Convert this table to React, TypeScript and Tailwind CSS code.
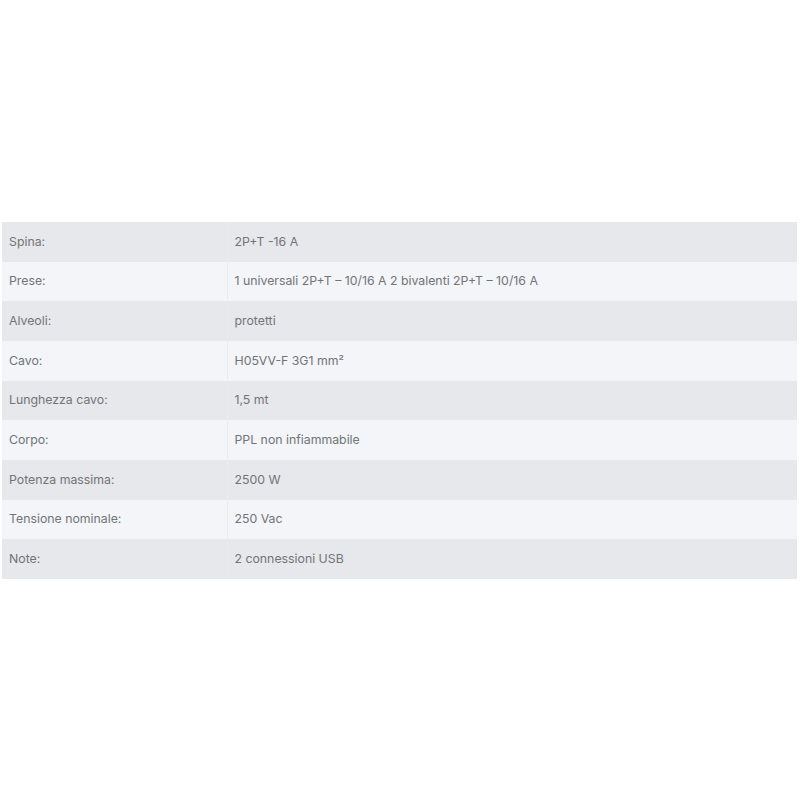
import React from 'react';

const rows = [
  ['Spina:', '2P+T -16 A'],
  ['Prese:', '1 universali 2P+T – 10/16 A 2 bivalenti 2P+T – 10/16 A'],
  ['Alveoli:', 'protetti'],
  ['Cavo:', 'H05VV-F 3G1 mm²'],
  ['Lunghezza cavo:', '1,5 mt'],
  ['Corpo:', 'PPL non infiammabile'],
  ['Potenza massima:', '2500 W'],
  ['Tensione nominale:', '250 Vac'],
  ['Note:', '2 connessioni USB'],
];

export default function App() {
  return (
    <div className="w-[800px] h-[800px] bg-white pt-[222px] pl-[2px] font-['Inter','Liberation_Sans',sans-serif]">
      <table className="w-[795px] border-collapse text-[12.3px] text-[#727477]">
        <tbody>
          {rows.map(([k, v], i) => (
            <tr key={i} className={`h-[39.67px] ${i % 2 === 0 ? 'bg-[#e6e8eb]' : 'bg-[#f3f5f8]'}`}>
              <td className="w-[225px] pl-[7px] border-r border-[#e9ebee] align-middle">{k}</td>
              <td className="pl-[7px] align-middle">{v}</td>
            </tr>
          ))}
        </tbody>
      </table>
    </div>
  );
}
